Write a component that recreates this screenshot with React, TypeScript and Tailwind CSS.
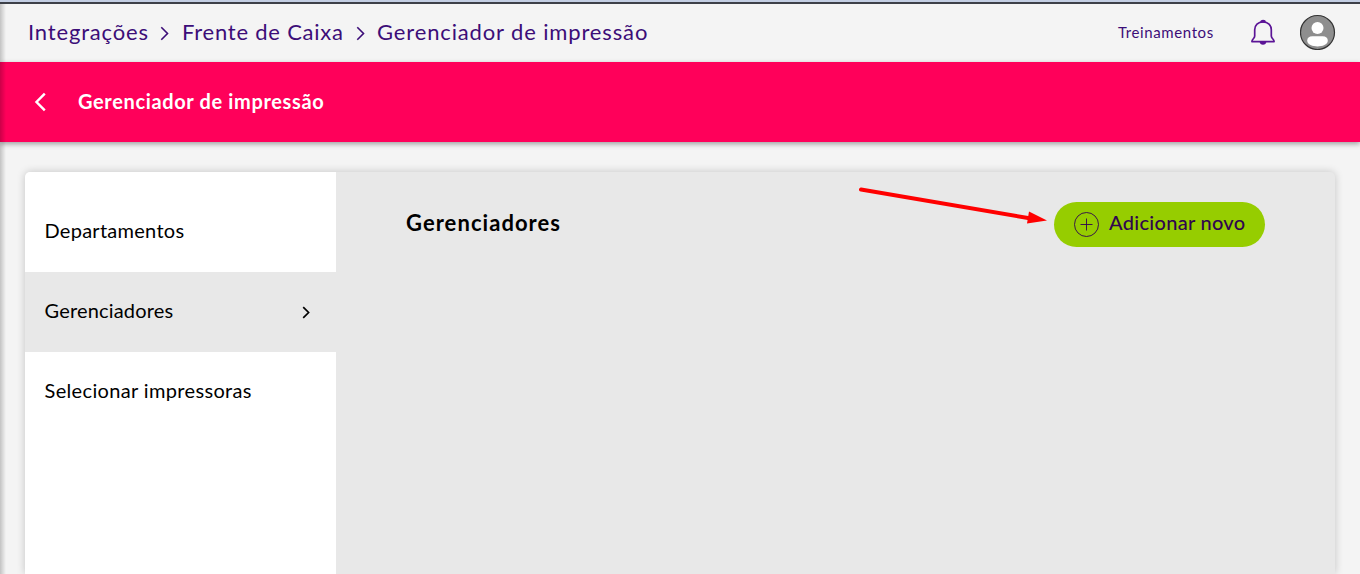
import React from 'react';

const menuItems = [
  { label: 'Departamentos', active: false, className: 'tracking-[0.27px]' },
  { label: 'Gerenciadores', active: true, className: 'tracking-[0.18px]' },
  { label: 'Selecionar impressoras', active: false, className: 'tracking-[0.35px]' },
];

const Chevron: React.FC<{ className?: string; strokeWidth?: number }> = ({ className, strokeWidth = 1.5 }) => (
  <svg viewBox="0 0 8 14" fill="none" stroke="currentColor" strokeWidth={strokeWidth} className={className}>
    <path d="M1 1.2 L6.8 7 L1 12.8" />
  </svg>
);

const TopBar: React.FC = () => (
  <header className="flex h-[62px] shrink-0 items-center border-t-2 border-[#c3cee3] bg-[#f4f4f4] text-[#3c0d78] shadow-[inset_0_2px_0_#3d4048]">
    <nav className="flex items-center pb-0.5 pl-7 text-[22px] font-normal whitespace-nowrap">
      <span className="w-[132px] tracking-[0.83px]">Integrações</span>
      <Chevron className="mt-1 mr-[13px] h-[15px] w-[9px]" />
      <span className="w-[174px] tracking-[0.77px]">Frente de Caixa</span>
      <Chevron className="mt-1 mr-[12px] h-[15px] w-[9px]" />
      <span className="tracking-[0.86px]">Gerenciador de impressão</span>
    </nav>
    <div className="ml-auto flex items-center pr-[25px]">
      <span className="w-[132px] text-[15px] tracking-[0.6px] whitespace-nowrap">Treinamentos</span>
      <svg viewBox="0 0 26 28" fill="none" stroke="#5b1496" strokeWidth="1.7" strokeLinejoin="round" className="mr-6 h-7 w-[26px]">
        <path d="M13 4 C8 4 4.7 7.2 4.7 11.8 V18 C4.7 20.6 1.9 20.9 1.9 23.6 H24.1 C24.1 20.9 21.3 20.6 21.3 18 V11.8 C21.3 7.2 18 4 13 4 Z" />
        <path d="M11 4 C11 2.2 15 2.2 15 4 Z M10.5 24 C10.8 26.4 15.2 26.4 15.5 24 Z" fill="#5b1496" />
      </svg>
      <svg viewBox="0 0 36 36" className="-mr-px h-9 w-9">
        <circle cx="17.5" cy="18.5" r="17" fill="#8e8e8e" stroke="#333" strokeWidth="1.2" />
        <circle cx="17.5" cy="14" r="6" fill="#fff" />
        <path d="M12.5 22.3 H22.5 Q27.8 22.3 27.8 26.8 C27.8 30.5 22.2 32.5 17.5 32.5 S7.2 30.5 7.2 26.8 Q7.2 22.3 12.5 22.3 Z" fill="#fff" />
      </svg>
    </div>
  </header>
);

const App: React.FC = () => {
  return (
    <div className="relative flex h-[574px] w-[1360px] flex-col overflow-hidden bg-[#f4f4f4] font-['Lato',sans-serif]">
      <TopBar />

      <div className="relative flex h-20 shrink-0 items-center bg-[#ff005a] pl-[34px] text-white shadow-[0_2px_5px_rgba(0,0,0,0.35)]">
        <Chevron className="mb-px h-[20px] w-[13px] rotate-180" strokeWidth={1.7} />
        <h1 className="ml-[31px] pb-0.5 text-[20px] font-bold tracking-[0.64px]">Gerenciador de impressão</h1>
      </div>

      <main className="mt-[30px] ml-[25px] flex w-[1310px] flex-1 overflow-hidden rounded-t-[5px] bg-[#e8e8e8] shadow-[0_0_8px_rgba(0,0,0,0.2)]">
        <aside className="w-[311px] bg-white pt-5 text-[20px] text-black">
          {menuItems.map((item) => (
            <div
              key={item.label}
              className={`flex h-20 items-center justify-between pr-[26px] pl-[19.5px] ${item.active ? 'bg-[#e8e8e8]' : ''}`}
            >
              <span className={`pb-1 ${item.className}`}>{item.label}</span>
              {item.active && <Chevron className="h-[13px] w-2" strokeWidth={1.8} />}
            </div>
          ))}
        </aside>

        <section className="flex flex-1 items-start justify-between pt-[30px] pr-[70px] pl-[70px]">
          <h2 className="mt-[4px] text-[22px] font-bold tracking-[1.05px] text-black">Gerenciadores</h2>
          <button className="flex h-[45px] w-[211px] items-center rounded-full bg-[#96cd00] pl-5 text-[20px] font-medium whitespace-nowrap text-[#30054f]">
            <svg viewBox="0 0 26 26" fill="none" stroke="currentColor" strokeWidth="0.9" className="mr-[9px] h-[26px] w-[26px]">
              <circle cx="12.5" cy="12.5" r="12" />
              <path d="M12.5 6.5 V18.5 M6.5 12.5 H18.5" />
            </svg>
            <span className="pb-[5px] tracking-[0.3px]">Adicionar novo</span>
          </button>
        </section>
      </main>

      {/* Pointer to the add button */}
      <svg viewBox="0 0 192 42" className="absolute top-[185px] left-[857px] h-[42px] w-48">
        <path d="M4 4.5 L174 33.5" stroke="#ff0000" strokeWidth="4" strokeLinecap="round" />
        <path d="M172 26.5 L190 35.5 L170 38.5 Z" fill="#ff0000" />
      </svg>

      <div className="absolute top-1 bottom-0 left-0 w-[6px] bg-gradient-to-r from-black/20 to-transparent" />
    </div>
  );
};

export default App;
